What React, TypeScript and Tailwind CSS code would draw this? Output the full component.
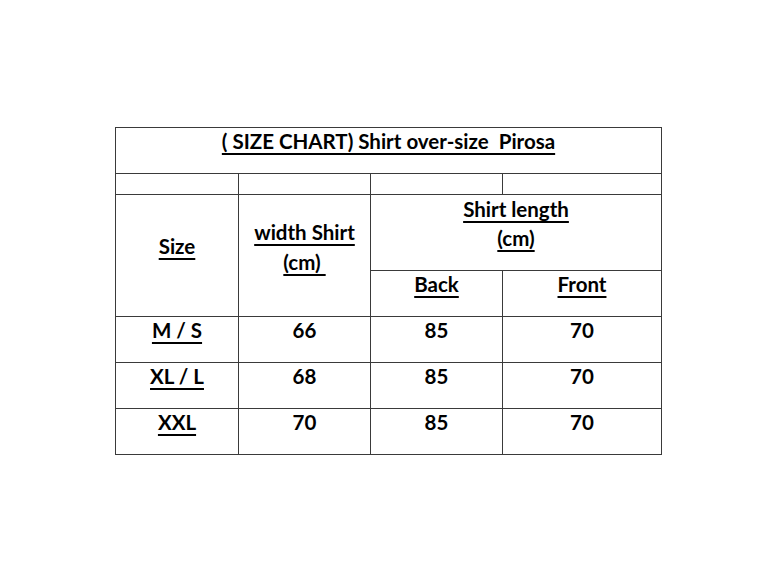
import { Fragment } from "react";

const font = { fontFamily: "Lato, 'Open Sans', sans-serif" };

function Cell({
  children,
  className = "",
  u = false,
}: {
  children?: React.ReactNode;
  className?: string;
  u?: boolean;
}) {
  return (
    <div className={`flex flex-col items-center justify-center bg-white pb-[18px] text-center leading-[29px] ${className}`}>
      {children ? (
        <span className={u ? "whitespace-pre underline decoration-[1.5px] underline-offset-[4px]" : "whitespace-pre"}>{children}</span>
      ) : null}
    </div>
  );
}

const rows = [
  ["M / S", "66", "85", "70"],
  ["XL / L", "68", "85", "70"],
  ["XXL", "70", "85", "70"],
];

export default function App() {
  return (
    <div className="min-h-[575px] w-[777px] bg-white pl-[115px] pt-[127px]" style={font}>
      <div className="grid w-[547px] grid-cols-[122px_131px_131px_158px] grid-rows-[45px_20px_75px_45px_45px_45px_45px] gap-px bg-[#3a3a3a] p-px text-[20.5px] font-bold text-black">
        <Cell className="col-span-4" u>
          {"( SIZE CHART) Shirt over-size  Pirosa"}
        </Cell>
        <div className="bg-white" />
        <div className="bg-white" />
        <div className="bg-white" />
        <div className="bg-white" />
        <Cell className="row-span-2" u>
          Size
        </Cell>
        <div className="row-span-2 flex flex-col items-center justify-center bg-white pb-[18px] leading-[30px]">
          <span className="underline decoration-[1.5px] underline-offset-[4px]">width Shirt</span>
          <span className="whitespace-pre underline decoration-[1.5px] underline-offset-[4px]">{"(cm)\u00a0"}</span>
        </div>
        <div className="col-span-2 flex flex-col items-center justify-center bg-white pb-[18px] leading-[29px]">
          <span className="underline decoration-[1.5px] underline-offset-[4px]">Shirt length</span>
          <span className="underline decoration-[1.5px] underline-offset-[4px]">(cm)</span>
        </div>
        <Cell u>Back</Cell>
        <Cell u>Front</Cell>
        {rows.map((r) => (
          <Fragment key={r[0]}>
            <Cell u>{r[0]}</Cell>
            <Cell>{r[1]}</Cell>
            <Cell>{r[2]}</Cell>
            <Cell>{r[3]}</Cell>
          </Fragment>
        ))}
      </div>
    </div>
  );
}
